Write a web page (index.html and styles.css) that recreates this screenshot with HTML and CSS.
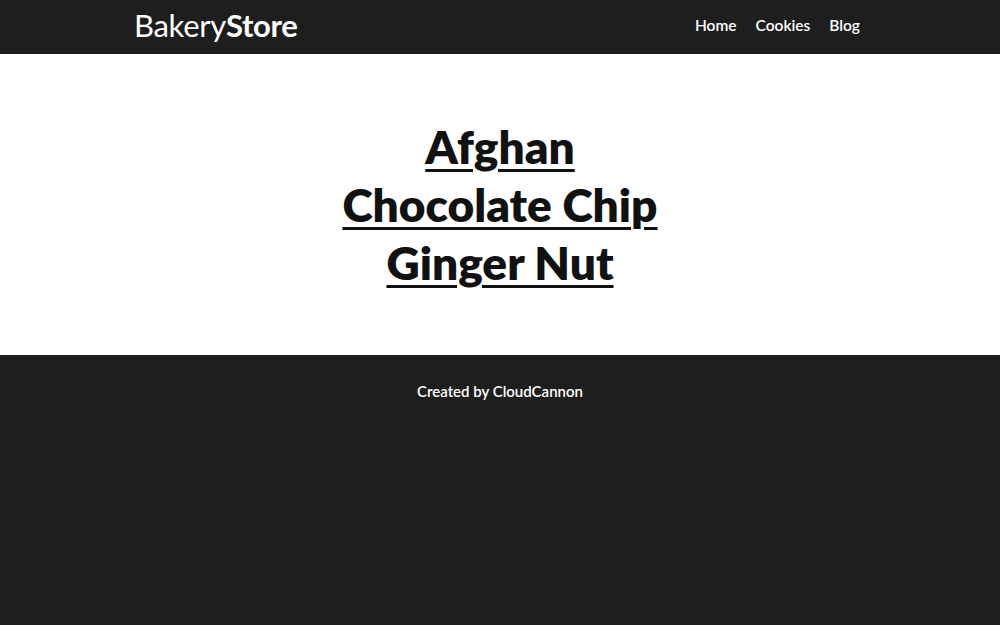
FILE: index.html
```html
<!DOCTYPE html>
<html lang="en">
<head>
<meta charset="utf-8">
<title>BakeryStore</title>
<link rel="stylesheet" href="styles.css">
</head>
<body>
<header class="site-header">
  <div class="container header-inner">
    <a class="logo" href="#">Bakery<strong>Store</strong></a>
    <nav class="nav">
      <a href="#">Home</a>
      <a href="#">Cookies</a>
      <a href="#">Blog</a>
    </nav>
  </div>
</header>
<main class="content">
  <ul class="cookie-list">
    <li><a href="#">Afghan</a></li>
    <li><a href="#">Chocolate Chip</a></li>
    <li><a href="#">Ginger Nut</a></li>
  </ul>
</main>
<footer class="site-footer">
  <p>Created by <a href="#">CloudCannon</a></p>
</footer>
</body>
</html>
```
FILE: styles.css
```css
* { box-sizing: border-box; }
html, body { margin: 0; padding: 0; height: 100%; }
body {
  font-family: Lato, "Open Sans", sans-serif;
  background: #1e1e1e;
  color: #fff;
  display: flex;
  flex-direction: column;
}
a { color: inherit; text-decoration: none; }
.container { width: 732px; margin: 0 auto; }
.site-header { background: #1e1e1e; height: 54px; }
.header-inner {
  height: 54px;
  padding-bottom: 4px;
  display: flex;
  align-items: center;
  justify-content: space-between;
}
.logo { font-size: 31px; font-weight: 400; letter-spacing: -0.3px; }
.logo strong { font-weight: 700; }
.nav { display: flex; gap: 19px; padding-right: 6px; font-size: 15.5px; font-weight: 600; }
.content {
  background: #fff;
  color: #111;
  height: 301px;
  display: flex;
  justify-content: center;
  align-items: center;
}
.cookie-list { list-style: none; margin: 0; padding: 0; text-align: center; }
.cookie-list li { font-size: 46px; font-weight: 800; line-height: 58px; }
.cookie-list a { text-decoration: underline; text-decoration-thickness: 3px; text-underline-offset: 5px; }
.site-footer { flex: 1; text-align: center; }
.site-footer p { margin: 27px 0 0; font-size: 15px; font-weight: 600; }
```
